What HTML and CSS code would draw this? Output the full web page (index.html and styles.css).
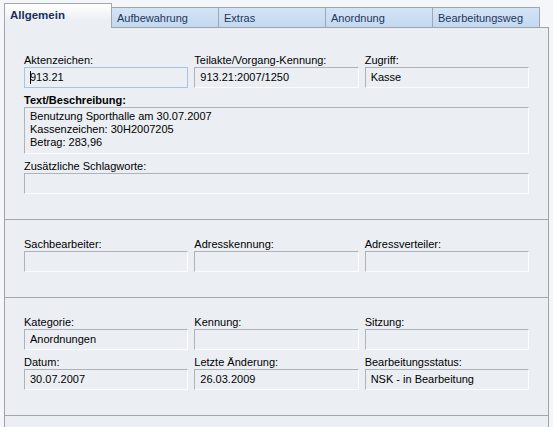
FILE: index.html
```html
<!DOCTYPE html>
<html lang="de">
<head>
<meta charset="utf-8">
<title>Allgemein</title>
<link rel="stylesheet" href="styles.css">
</head>
<body>
<div class="window">
  <div class="tabs">
    <div class="tab active">Allgemein</div>
    <div class="tab">Aufbewahrung</div>
    <div class="tab">Extras</div>
    <div class="tab">Anordnung</div>
    <div class="tab">Bearbeitungsweg</div>
  </div>
  <div class="panel">
    <div class="section first">
      <div class="grid3">
        <div class="item">
          <div class="label">Aktenzeichen:</div>
          <div class="field focus"><span class="caret"></span>913.21</div>
        </div>
        <div class="item">
          <div class="label">Teilakte/Vorgang-Kennung:</div>
          <div class="field">913.21:2007/1250</div>
        </div>
        <div class="item">
          <div class="label">Zugriff:</div>
          <div class="field">Kasse</div>
        </div>
      </div>
      <div class="item">
        <div class="label bold">Text/Beschreibung:</div>
        <div class="field area">Benutzung Sporthalle am 30.07.2007<br>Kassenzeichen: 30H2007205<br>Betrag: 283,96</div>
      </div>
      <div class="item">
        <div class="label">Zusätzliche Schlagworte:</div>
        <div class="field"></div>
      </div>
    </div>
    <div class="section">
      <div class="grid3">
        <div class="item">
          <div class="label">Sachbearbeiter:</div>
          <div class="field"></div>
        </div>
        <div class="item">
          <div class="label">Adresskennung:</div>
          <div class="field"></div>
        </div>
        <div class="item">
          <div class="label">Adressverteiler:</div>
          <div class="field"></div>
        </div>
      </div>
    </div>
    <div class="section">
      <div class="grid3">
        <div class="item">
          <div class="label">Kategorie:</div>
          <div class="field">Anordnungen</div>
        </div>
        <div class="item">
          <div class="label">Kennung:</div>
          <div class="field"></div>
        </div>
        <div class="item">
          <div class="label">Sitzung:</div>
          <div class="field"></div>
        </div>
      </div>
      <div class="grid3">
        <div class="item">
          <div class="label">Datum:</div>
          <div class="field">30.07.2007</div>
        </div>
        <div class="item">
          <div class="label">Letzte Änderung:</div>
          <div class="field">26.03.2009</div>
        </div>
        <div class="item">
          <div class="label">Bearbeitungsstatus:</div>
          <div class="field">NSK - in Bearbeitung</div>
        </div>
      </div>
    </div>
    <div class="section last"></div>
  </div>
</div>
</body>
</html>
```
FILE: styles.css
```css
html, body {
  margin: 0;
  padding: 0;
}
body {
  width: 553px;
  height: 427px;
  overflow: hidden;
  background: #f4f6f9;
  font-family: "Liberation Sans", Arial, sans-serif;
  font-size: 11px;
  color: #000;
}
.window {
  padding: 3px 0 0 4px;
}
.tabs {
  display: flex;
  align-items: flex-end;
  height: 24px;
}
.tab {
  box-sizing: border-box;
  width: 108px;
  height: 20px;
  margin-left: -1px;
  padding: 4px 0 0 5px;
  line-height: 13px;
  border: 1px solid #9fa7b1;
  border-bottom: none;
  background: linear-gradient(#d3e4f6, #c3d8f0);
  color: #1c3760;
}
.tab.active {
  margin-left: 0;
  height: 25px;
  margin-bottom: -1px;
  padding-top: 5px;
  position: relative;
  z-index: 1;
  font-weight: bold;
  color: #172f5c;
  font-size: 11.5px;
  background: linear-gradient(#ffffff, #ebeff4 70%);
}
.panel {
  box-sizing: border-box;
  width: 545px;
  height: 400px;
  overflow: hidden;
  border: 1px solid #9fa3a8;
  border-bottom: none;
  background: #ebeff4;
}
.section {
  display: flex;
  flex-direction: column;
  gap: 6px;
  padding: 18px 19px 25px 19px;
  border-bottom: 1px solid #a4a6a9;
}
.section.first {
  padding-top: 26px;
}
.section.last {
  border-bottom: none;
  height: 10px;
  padding: 0;
}
.grid3 {
  display: grid;
  grid-template-columns: repeat(3, 1fr);
  column-gap: 6px;
}
.item {
  display: flex;
  flex-direction: column;
  min-width: 0;
}
.label {
  line-height: 13px;
  height: 13px;
  white-space: nowrap;
}
.label.bold {
  font-weight: bold;
}
.field {
  box-sizing: border-box;
  height: 21px;
  padding: 0 5px;
  line-height: 19px;
  border: 1px solid;
  border-color: #afb3b9 #fbfcfd #fbfcfd #afb3b9;
  background: #ebeff3;
  white-space: nowrap;
  overflow: hidden;
}
.field.focus {
  border-color: #a7c3e2;
}
.field.area {
  height: 47px;
  padding-top: 2px;
  line-height: 13px;
}
.caret {
  display: inline-block;
  width: 1px;
  height: 13px;
  background: #000;
  margin-right: -1px;
  vertical-align: -3px;
}
```
